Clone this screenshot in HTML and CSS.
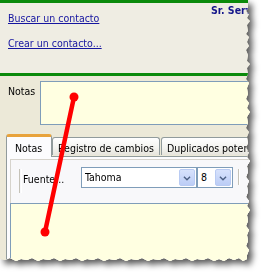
FILE: index.html
```html
<!DOCTYPE html>
<html>
<head>
<meta charset="utf-8">
<link rel="stylesheet" href="styles.css">
</head>
<body>
<div class="shot">
  <div class="app">
    <header class="head">
      <div class="links">
        <a class="link">Buscar un contacto</a>
        <a class="link">Crear un contacto...</a>
      </div>
      <div class="name">Sr. Servidor</div>
    </header>
    <section class="main">
      <div class="notes-row">
        <span class="notes-label">Notas</span>
        <div class="notes-box"></div>
      </div>
      <div class="tabs">
        <div class="tab active">Notas</div>
        <div class="tab">Registro de cambios</div>
        <div class="tab">Duplicados potenciales</div>
      </div>
      <div class="panel">
        <div class="toolbar">
          <span class="grip"></span>
          <span class="tool-label">Fuente...</span>
          <div class="combo font">
            <span class="combo-text">Tahoma</span>
            <span class="combo-btn"><svg viewBox="0 0 16 18" width="16" height="18"><path d="M4.5 7.5 L8 11 L11.5 7.5" fill="none" stroke="#4d6185" stroke-width="1.6"/></svg></span>
          </div>
          <div class="combo size">
            <span class="combo-text">8</span>
            <span class="combo-btn"><svg viewBox="0 0 16 18" width="16" height="18"><path d="M4.5 7.5 L8 11 L11.5 7.5" fill="none" stroke="#4d6185" stroke-width="1.6"/></svg></span>
          </div>
          <span class="sep"></span>
        </div>
        <div class="editor"></div>
      </div>
    </section>
  </div>
  <svg class="mark" width="262" height="274" viewBox="0 0 262 274">
    <line x1="74" y1="97" x2="45" y2="232" stroke="#ff0000" stroke-width="4.5" stroke-linecap="round"/>
    <circle cx="74" cy="97" r="4.5" fill="#ff0000"/>
    <circle cx="45" cy="232" r="4.5" fill="#ff0000"/>
  </svg>
</div>
</body>
</html>
```

FILE: styles.css
```css
html, body {
  margin: 0;
  padding: 0;
  background: #ffffff;
}
body {
  width: 262px;
  height: 274px;
  overflow: hidden;
  font-family: "DejaVu Sans Condensed", "DejaVu Sans", sans-serif;
  font-stretch: condensed;
  font-size: 10.5px;
  color: #000;
}
.shot {
  position: relative;
  width: 262px;
  height: 274px;
  filter: drop-shadow(4px 4px 3px rgba(0, 0, 0, 0.65));
}
.app {
  width: 252px;
  height: 264px;
  overflow: hidden;
  display: flex;
  flex-direction: column;
  background: #ece9d8;
  clip-path: polygon(248px 0, 248px 9px, 246px 11px, 249px 14px, 247px 18px, 250px 21px, 247px 25px, 248px 31px, 246px 34px, 249px 37px, 247px 42px, 249px 46px, 246px 50px, 248px 55px, 247px 61px, 250px 64px, 247px 68px, 248px 74px, 246px 79px, 249px 83px, 247px 88px, 248px 94px, 246px 99px, 249px 103px, 247px 108px, 250px 112px, 247px 117px, 248px 123px, 246px 128px, 249px 132px, 247px 137px, 248px 143px, 246px 148px, 249px 152px, 247px 157px, 250px 161px, 247px 166px, 248px 172px, 246px 177px, 249px 181px, 247px 186px, 248px 192px, 246px 197px, 249px 201px, 247px 206px, 250px 210px, 247px 215px, 248px 221px, 246px 226px, 249px 230px, 247px 235px, 248px 241px, 246px 246px, 249px 250px, 247px 255px, 247px 259px, 243px 261px, 239px 258px, 234px 260px, 229px 258px, 224px 261px, 219px 259px, 214px 261px, 208px 258px, 203px 260px, 197px 259px, 192px 261px, 186px 258px, 181px 260px, 175px 259px, 170px 261px, 164px 258px, 159px 260px, 153px 259px, 148px 261px, 142px 258px, 137px 260px, 131px 259px, 126px 261px, 120px 258px, 115px 260px, 109px 259px, 104px 261px, 98px 258px, 93px 260px, 87px 259px, 82px 261px, 76px 258px, 71px 260px, 65px 259px, 60px 261px, 54px 258px, 49px 260px, 43px 259px, 38px 261px, 32px 258px, 27px 260px, 21px 259px, 16px 261px, 10px 258px, 5px 260px, 0 259px, 0 0);
}
.head {
  flex: none;
  height: 70px;
  border-top: 3px solid #0b8a0b;
  border-bottom: 3px solid #0b8a0b;
  background: #efede3;
  display: flex;
}
.links {
  width: 211px;
  flex: none;
  box-sizing: border-box;
  padding: 9px 0 0 8px;
  display: flex;
  flex-direction: column;
  gap: 12px;
  align-items: flex-start;
}
.link {
  color: #1515a0;
  text-decoration: underline;
  line-height: 13px;
}
.name {
  flex: none;
  white-space: nowrap;
  font-weight: bold;
  color: #14168a;
  line-height: 13px;
  padding-top: 1px;
}
.main {
  flex: 1;
  display: flex;
  flex-direction: column;
  background: #ece9d8;
}
.notes-row {
  display: flex;
  margin-top: 5px;
  height: 44px;
}
.notes-label {
  width: 32px;
  padding-left: 8px;
  padding-top: 4px;
  line-height: 13px;
}
.notes-box {
  flex: 1;
  margin-right: -20px;
  border: 1px solid #7f9db9;
  background: #ffffe1;
}
.tabs {
  display: flex;
  align-items: flex-end;
  margin-top: 9px;
  margin-left: 6px;
  height: 22px;
  position: relative;
  z-index: 1;
}
.tab {
  flex: none;
  white-space: nowrap;
  height: 18px;
  box-sizing: border-box;
  padding: 4px 5px 0 5px;
  line-height: 12px;
  border: 1px solid #919b9c;
  border-bottom: none;
  border-radius: 3px 3px 0 0;
  background: linear-gradient(#ffffff, #f3f3ef 60%, #e6e4dc);
  margin-bottom: 1px;
}
.tab.active {
  width: 46px;
  height: 23px;
  padding: 5px 0 0 8px;
  margin-bottom: -1px;
  background: #fcfcfe;
  border-top: 3px solid #e8a33c;
}
.tab:not(.active) + .tab {
  margin-left: 1px;
}
.panel {
  flex: 1;
  margin-left: 6px;
  margin-right: -20px;
  border: 1px solid #919b9c;
  background: #fcfcfe;
  padding: 2px 0 0 3px;
  display: flex;
  flex-direction: column;
}
.toolbar {
  height: 44px;
  box-sizing: border-box;
  border-top: 1px solid #d6d3cc;
  border-left: 1px solid #d6d3cc;
  background: #f8f8fa;
  display: flex;
  align-items: flex-start;
  padding: 7px 0 0 8px;
}
.grip {
  width: 1px;
  height: 24px;
  margin-top: 2px;
  border-left: 1px solid #c5c2b8;
  border-right: 1px solid #ffffff;
}
.tool-label {
  width: 58px;
  margin-left: 1px;
  padding-top: 6px;
  line-height: 13px;
}
.combo {
  height: 21px;
  box-sizing: border-box;
  border: 1px solid #7f9db9;
  background: #ffffff;
  display: flex;
  align-items: center;
  padding: 1px;
}
.combo.font { width: 116px; }
.combo.size { width: 36px; }
.combo-text {
  flex: 1;
  padding-left: 2px;
  line-height: 13px;
}
.combo-btn {
  width: 16px;
  height: 17px;
  box-sizing: border-box;
  border: 1px solid #b9cbf3;
  border-radius: 2px;
  background: linear-gradient(#d7e2fc, #bccdf6);
  display: flex;
  align-items: center;
  justify-content: center;
  overflow: hidden;
}
.combo-btn svg { display: block; }
.sep {
  width: 1px;
  height: 16px;
  margin: 2px 0 0 5px;
  background: #c5c2b8;
  border-right: 1px solid #fff;
}
.editor {
  flex: 1;
  border-top: 1px solid #7f9db9;
  border-left: 1px solid #7f9db9;
  background: #ffffe1;
}
.mark {
  position: absolute;
  left: 0;
  top: 0;
}
```
